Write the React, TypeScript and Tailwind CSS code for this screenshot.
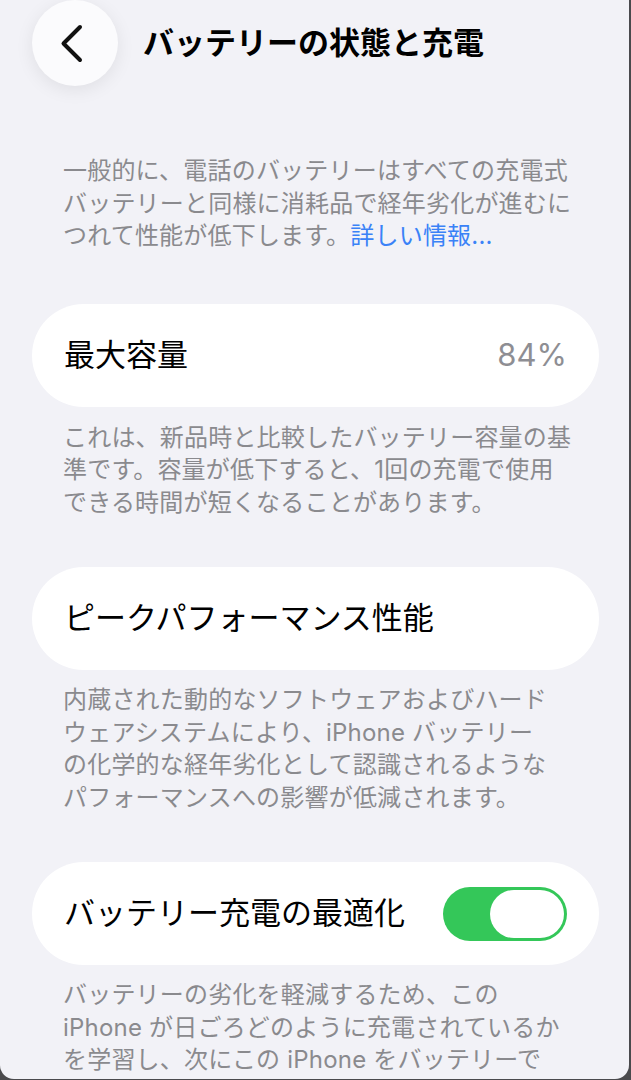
import { ReactNode } from "react";

const font = { fontFamily: '"Inter", "Noto Sans CJK JP", sans-serif' };

const Note = ({ lines, className = "" }: { lines: ReactNode[]; className?: string }) => (
  <div className={`px-[63px] text-[24px] leading-[32.5px] text-[#8a8a8e] tracking-[0.2px] ${className}`}>
    {lines.map((line, i) => (
      <div key={i} className="whitespace-nowrap">
        {line}
      </div>
    ))}
  </div>
);

const Row = ({ label, children, className = "" }: { label: string; children?: ReactNode; className?: string }) => (
  <div
    className={`ml-[32px] mr-[30px] h-[103px] rounded-full bg-white flex items-center justify-between pl-[32px] pr-[32px] ${className}`}
  >
    <span className="text-[31px] text-black whitespace-nowrap">{label}</span>
    {children}
  </div>
);

const Toggle = () => (
  <div className="w-[124px] h-[54px] rounded-full bg-[#34c759] p-[3px] flex justify-end">
    <div className="w-[74px] h-[48px] rounded-full bg-white" />
  </div>
);

export default function App() {
  return (
    <div className="w-[631px] h-[1080px] bg-[#4a4a4d] overflow-hidden" style={font}>
      <div className="w-[629px] h-[1079px] bg-[#f2f2f7] rounded-b-[14px] overflow-hidden">
        {/* nav bar */}
        <div className="flex items-center h-[86px] pl-[32px] gap-[25px]">
          <button className="w-[86px] h-[86px] rounded-full bg-[#fbfbfd] shadow-[0_4px_18px_rgba(0,0,0,0.08)] flex items-center justify-center">
            <svg width="30" height="44" viewBox="0 0 30 44" fill="none">
              <path
                d="M20 6 L3.5 22.5 L20 39"
                stroke="#111"
                strokeWidth="4"
                strokeLinecap="round"
                strokeLinejoin="round"
              />
            </svg>
          </button>
          <h1 className="text-[31px] font-semibold text-black whitespace-nowrap">バッテリーの状態と充電</h1>
        </div>

        <Note
          className="mt-[69px]"
          lines={[
            "一般的に、電話のバッテリーはすべての充電式",
            "バッテリーと同様に消耗品で経年劣化が進むに",
            <>
              つれて性能が低下します。<span className="text-[#3a82f7]">詳しい情報...</span>
            </>,
          ]}
        />

        <Row label="最大容量" className="mt-[51px]">
          <span className="text-[31px] text-[#8e8e93]">84%</span>
        </Row>
        <Note
          className="mt-[15px]"
          lines={[
            "これは、新品時と比較したバッテリー容量の基",
            "準です。容量が低下すると、1回の充電で使用",
            "できる時間が短くなることがあります。",
          ]}
        />

        <Row label="ピークパフォーマンス性能" className="mt-[48px]" />
        <Note
          className="mt-[14px]"
          lines={[
            "内蔵された動的なソフトウェアおよびハード",
            "ウェアシステムにより、iPhone バッテリー",
            "の化学的な経年劣化として認識されるような",
            "パフォーマンスへの影響が低減されます。",
          ]}
        />

        <Row label="バッテリー充電の最適化" className="mt-[48px]">
          <Toggle />
        </Row>
        <Note
          className="mt-[14px]"
          lines={[
            "バッテリーの劣化を軽減するため、この",
            "iPhone が日ごろどのように充電されているか",
            "を学習し、次にこの iPhone をバッテリーで",
            "使い始めるまで80%を超える充電を保留します。",
          ]}
        />
      </div>
    </div>
  );
}
